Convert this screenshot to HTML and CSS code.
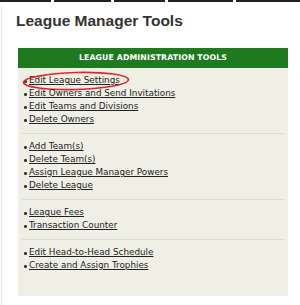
FILE: index.html
```html
<!DOCTYPE html>
<html lang="en">
<head>
    <meta charset="UTF-8">
    <meta name="viewport" content="width=device-width, initial-scale=1.0">
    <title>League Manager Tools</title>
    <link rel="stylesheet" href="styles.css">
</head>
<body>
    <div class="tabs">
        <span class="tab t1"></span>
        <span class="tab t2"></span>
        <span class="tab t3"></span>
        <span class="tab t4"></span>
        <span class="tab t5"></span>
    </div>
    <div class="page">
        <h1>League Manager Tools</h1>

        <div class="panel">
            <div class="panel-head">LEAGUE ADMINISTRATION TOOLS</div>
            <div class="panel-body">
                <ul class="tool-list">
                    <li class="circled">
                        <a href="#">Edit League Settings</a>
                        <svg class="ring" width="110" height="22" viewBox="0 0 110 22">
                            <ellipse cx="55" cy="11" rx="52.5" ry="8.5" fill="none" stroke="#e0262a" stroke-width="1.6" transform="rotate(-1.5 55 11)"/>
                        </svg>
                    </li>
                    <li><a href="#">Edit Owners and Send Invitations</a></li>
                    <li><a href="#">Edit Teams and Divisions</a></li>
                    <li><a href="#">Delete Owners</a></li>
                </ul>
                <ul class="tool-list">
                    <li><a href="#">Add Team(s)</a></li>
                    <li><a href="#">Delete Team(s)</a></li>
                    <li><a href="#">Assign League Manager Powers</a></li>
                    <li><a href="#">Delete League</a></li>
                </ul>
                <ul class="tool-list">
                    <li><a href="#">League Fees</a></li>
                    <li><a href="#">Transaction Counter</a></li>
                </ul>
                <ul class="tool-list">
                    <li><a href="#">Edit Head-to-Head Schedule</a></li>
                    <li><a href="#">Create and Assign Trophies</a></li>
                </ul>
            </div>
        </div>
    </div>
</body>
</html>
```

FILE: styles.css
```css
* {
    box-sizing: border-box;
}

body {
    margin: 0;
    background-color: #fff;
    color: #333;
    font-family: 'DejaVu Sans', Verdana, sans-serif;
}

.tabs {
    display: flex;
    gap: 3px;
    height: 2px;
}

.tab {
    background-color: #222;
}

.t1 { width: 51px; }
.t2 { width: 57px; }
.t3 { width: 51px; }
.t4 { width: 65px; }
.t5 { flex: 1; }

.page {
    margin: 4px 0 0 1px;
    border-left: 1px solid #e2e2e2;
    padding: 5px 0 14px 0;
    min-height: 299px;
}

h1 {
    font-family: 'Liberation Sans', Arial, sans-serif;
    font-size: 15.5px;
    font-weight: bold;
    color: #333;
    margin: 0 0 17px 14px;
    line-height: 20px;
}

.panel {
    margin-left: 16px;
    width: 270px;
}

.panel-head {
    background-color: #1f7a1f;
    color: #fff;
    font-size: 7.8px;
    font-weight: bold;
    text-align: center;
    height: 20px;
    line-height: 20px;
    letter-spacing: 0.1px;
}

.panel-body {
    background-color: #f0efe6;
    padding: 0 4px 17px 4px;
}

.tool-list {
    list-style: none;
    margin: 0;
    padding: 6px 0 7px 0;
    border-bottom: 1px solid #dcdcd6;
}

.tool-list:last-child {
    border-bottom: none;
}

.tool-list li {
    position: relative;
    font-size: 8.8px;
    line-height: 13px;
    padding-left: 7px;
}

.tool-list li::before {
    content: "";
    position: absolute;
    left: 2px;
    top: 6px;
    width: 2.5px;
    height: 2.5px;
    border-radius: 50%;
    background-color: #333;
}

.tool-list a {
    color: #222;
    text-decoration: underline;
}

.ring {
    position: absolute;
    left: -1px;
    top: -4px;
}
```
